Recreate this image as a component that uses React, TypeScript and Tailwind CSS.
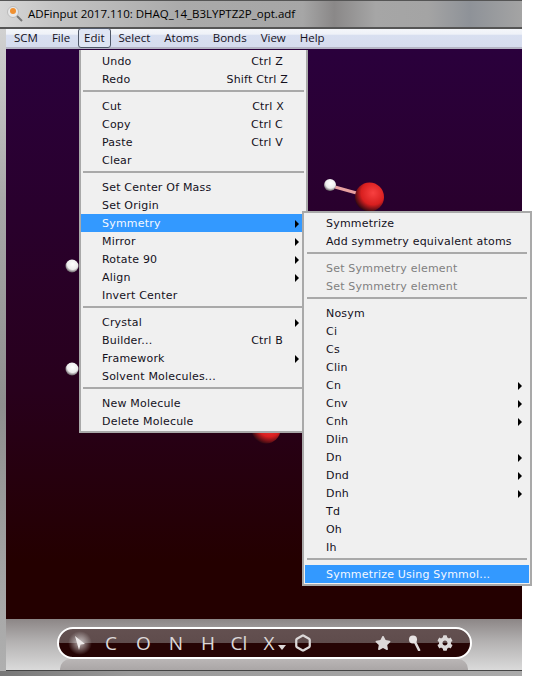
import React from 'react';
import { Hexagon } from 'lucide-react';
import { FaCog, FaStar } from 'react-icons/fa';

type Entry =
  | { sep: true }
  | { label: string; shortcut?: string; pr?: string; sub?: boolean; active?: boolean; disabled?: boolean };

const editMenu: Entry[] = [
  { label: 'Undo', shortcut: 'Ctrl Z', pr: 'pr-[23px]' },
  { label: 'Redo', shortcut: 'Shift Ctrl Z', pr: 'pr-[18px]' },
  { sep: true },
  { label: 'Cut', shortcut: 'Ctrl X', pr: 'pr-[22px]' },
  { label: 'Copy', shortcut: 'Ctrl C', pr: 'pr-[23px]' },
  { label: 'Paste', shortcut: 'Ctrl V', pr: 'pr-[23px]' },
  { label: 'Clear' },
  { sep: true },
  { label: 'Set Center Of Mass' },
  { label: 'Set Origin' },
  { label: 'Symmetry', sub: true, active: true },
  { label: 'Mirror', sub: true },
  { label: 'Rotate 90', sub: true },
  { label: 'Align', sub: true },
  { label: 'Invert Center' },
  { sep: true },
  { label: 'Crystal', sub: true },
  { label: 'Builder...', shortcut: 'Ctrl B', pr: 'pr-[23px]' },
  { label: 'Framework', sub: true },
  { label: 'Solvent Molecules...' },
  { sep: true },
  { label: 'New Molecule' },
  { label: 'Delete Molecule' },
];

const symmetryMenu: Entry[] = [
  { label: 'Symmetrize' },
  { label: 'Add symmetry equivalent atoms' },
  { sep: true },
  { label: 'Set Symmetry element', disabled: true },
  { label: 'Set Symmetry element', disabled: true },
  { sep: true },
  { label: 'Nosym' },
  { label: 'Ci' },
  { label: 'Cs' },
  { label: 'Clin' },
  { label: 'Cn', sub: true },
  { label: 'Cnv', sub: true },
  { label: 'Cnh', sub: true },
  { label: 'Dlin' },
  { label: 'Dn', sub: true },
  { label: 'Dnd', sub: true },
  { label: 'Dnh', sub: true },
  { label: 'Td' },
  { label: 'Oh' },
  { label: 'Ih' },
  { sep: true },
  { label: 'Symmetrize Using Symmol...', active: true },
];

const MenuRows = ({ entries }: { entries: Entry[] }) => (
  <>
    {entries.map((e, i) =>
      'sep' in e ? (
        <div key={i} className="h-[9px] pt-[2px] pl-[2px] pr-[2px]">
          <div className="h-[2px] bg-[#a9a9a9]" />
        </div>
      ) : (
        <div
          key={i}
          className={`relative flex h-[18px] items-center pl-[21px] pt-[2px] tracking-[0.2px] ${
            e.active ? 'bg-[#3399ff] text-[#f4f8ff]' : e.disabled ? 'text-[#808080]' : 'text-[#14101c]'
          }`}
        >
          <span>{e.label}</span>
          {e.shortcut && <span className={`ml-auto ${e.pr}`}>{e.shortcut}</span>}
          {e.sub && (
            <span className="ml-auto mr-[7px] h-0 w-0 border-y-[4px] border-l-[4px] border-y-transparent border-l-black" />
          )}
        </div>
      ),
    )}
  </>
);

const Molecule = () => (
  <svg className="absolute inset-0" width="516" height="570" viewBox="6 50 516 570">
    <defs>
      <radialGradient id="oxy" cx="0.62" cy="0.36" r="0.68">
        <stop offset="0" stopColor="#f84040" />
        <stop offset="0.6" stopColor="#d81f1f" />
        <stop offset="1" stopColor="#2a0812" />
      </radialGradient>
      <radialGradient id="hyd" cx="0.55" cy="0.36" r="0.68">
        <stop offset="0" stopColor="#ffffff" />
        <stop offset="0.6" stopColor="#ececec" />
        <stop offset="1" stopColor="#4a4048" />
      </radialGradient>
    </defs>
    <line x1="335" y1="188" x2="360" y2="195" stroke="#e8a0a0" strokeWidth="3" />
    <circle cx="330" cy="186" r="6" fill="url(#hyd)" />
    <circle cx="369.5" cy="198" r="14.5" fill="url(#oxy)" />
    <circle cx="72" cy="267" r="6.5" fill="url(#hyd)" />
    <circle cx="72" cy="370" r="6.5" fill="url(#hyd)" />
    <circle cx="266" cy="430" r="14.5" fill="url(#oxy)" />
  </svg>
);

const Letter = ({ w, children }: { w: string; children: React.ReactNode }) => (
  <div className={`flex items-center justify-center text-[19px] leading-none ${w}`}>{children}</div>
);

const Toolbar = () => (
  <div className="relative flex h-[51px] items-start bg-[linear-gradient(#8c8686,#b4b2b2_45%,#dadada)] pl-[51px] pt-[8px]">
    <div className="absolute bottom-0 left-[54px] h-[11px] w-[408px] rounded-t-[10px] bg-[linear-gradient(#bab6b6,#aaa6a6)]" />
    <div className="relative flex h-[32px] w-[415px] items-center overflow-hidden rounded-[16px] border-2 border-white bg-[linear-gradient(#635050_0,#5f4c4c_50%,#260404_50%,#260404_100%)] pl-[5px] text-[#dcd8d8] [font-family:'Open_Sans',sans-serif]">
      <Letter w="w-[31px]">
        <div className="relative flex h-[24px] w-[24px] items-center justify-center rounded-full bg-[radial-gradient(circle,rgba(255,255,255,0.7),rgba(255,255,255,0)_70%)]">
          <svg width="12" height="14" viewBox="0 0 12 14">
            <path d="M1 0 L11 8 L6.5 8.5 L5 14 Z" fill="#eeeaea" />
          </svg>
        </div>
      </Letter>
      <Letter w="w-[32px]">C</Letter>
      <Letter w="w-[33px]">O</Letter>
      <Letter w="w-[32px]">N</Letter>
      <Letter w="w-[32px]">H</Letter>
      <Letter w="w-[30px]">Cl</Letter>
      <Letter w="w-[30px]">
        <span className="relative">
          X
          <span className="absolute left-[14px] top-[11px] h-0 w-0 border-x-[4px] border-t-[5px] border-x-transparent border-t-[#dcd8d8]" />
        </span>
      </Letter>
      <Letter w="w-[38px]">
        <Hexagon size={18} strokeWidth={3} />
      </Letter>
      <div className="w-[45px]" />
      <Letter w="w-[32px]">
        <FaStar size={16} />
      </Letter>
      <Letter w="w-[32px]">
        <svg width="14" height="16" viewBox="0 0 14 16">
          <line x1="6" y1="5" x2="11" y2="15" stroke="#dcd8d8" strokeWidth="2.6" strokeLinecap="round" />
          <circle cx="5" cy="4.5" r="4" fill="#e8e4e4" />
        </svg>
      </Letter>
      <Letter w="w-[28px]">
        <FaCog size={16} />
      </Letter>
    </div>
  </div>
);

export default function App() {
  return (
    <div className="relative h-[676px] w-[534px] overflow-hidden bg-white text-[11px] [font-family:'DejaVu_Sans',sans-serif]">
      <div className="flex h-[676px] w-[522px] flex-col rounded-tl-[6px] bg-[linear-gradient(#d8d8d8,#a8a8a8_30%,#8f8f8f_60%,#b0b0b0)]">
        {/* Title bar */}
        <div className="flex h-[29px] items-center gap-[5px] border-t border-[#555] border-b-2 border-b-[#555] bg-[linear-gradient(90deg,#d6d6d6,#c4c4c4_10%,#aaaaaa_35%,#a6a6a6_58%,#8a8888_64%,#a6a6a6_72%,#a4a4a4_82%,#8e9298_90%,#a4a4a4)] pl-[7px] text-[11.5px] text-black [font-family:'Open_Sans',sans-serif]">
          <svg width="16" height="16" viewBox="0 0 16 16">
            <line x1="9" y1="9" x2="15" y2="15" stroke="#777" strokeWidth="2" />
            <circle cx="6" cy="6" r="5.5" fill="#e8e8e8" stroke="#bbb" />
            <circle cx="6" cy="5" r="3" fill="#f09030" />
          </svg>
          <span>ADFinput 2017.110: DHAQ_14_B3LYPTZ2P_opt.adf</span>
        </div>

        {/* Menu bar */}
        <div className="ml-[6px] flex h-[20px] items-center gap-[14px] border-b-2 border-b-[#b4b4c4] bg-[linear-gradient(#f4f6fa_0,#eef1f8_30%,#d8dff0_32%,#d6dcee)] pl-[8px] text-[11.5px] text-[#14101c] [font-family:'Open_Sans',sans-serif]">
          <span>SCM</span>
          <span>File</span>
          <span className="-mx-[6px] rounded-[3px] border border-[#505868] bg-[#dfe5f3] px-[5px]">Edit</span>
          <span>Select</span>
          <span>Atoms</span>
          <span>Bonds</span>
          <span>View</span>
          <span>Help</span>
        </div>

        {/* Canvas */}
        <div className="relative ml-[6px] flex-1 bg-[linear-gradient(#2a003c,#28001c_60%,#240000_90%)]">
          <Molecule />
        </div>

        <div className="ml-[6px] border-b border-[#444]">
          <Toolbar />
        </div>
        <div className="h-[5px] bg-[linear-gradient(90deg,#777,#999_25%,#aaa)]" />
      </div>

      {/* Edit menu */}
      <div className="absolute left-[79px] top-[50px] w-[229px] border-2 border-[#a9a9a9] border-t-0 bg-[#f0f0f0] pt-[2px] pb-px">
        <MenuRows entries={editMenu} />
      </div>

      {/* Symmetry submenu */}
      <div className="absolute left-[302px] top-[211px] w-[230px] border-2 border-[#a9a9a9] bg-[#f0f0f0] p-px">
        <MenuRows entries={symmetryMenu} />
      </div>
    </div>
  );
}
